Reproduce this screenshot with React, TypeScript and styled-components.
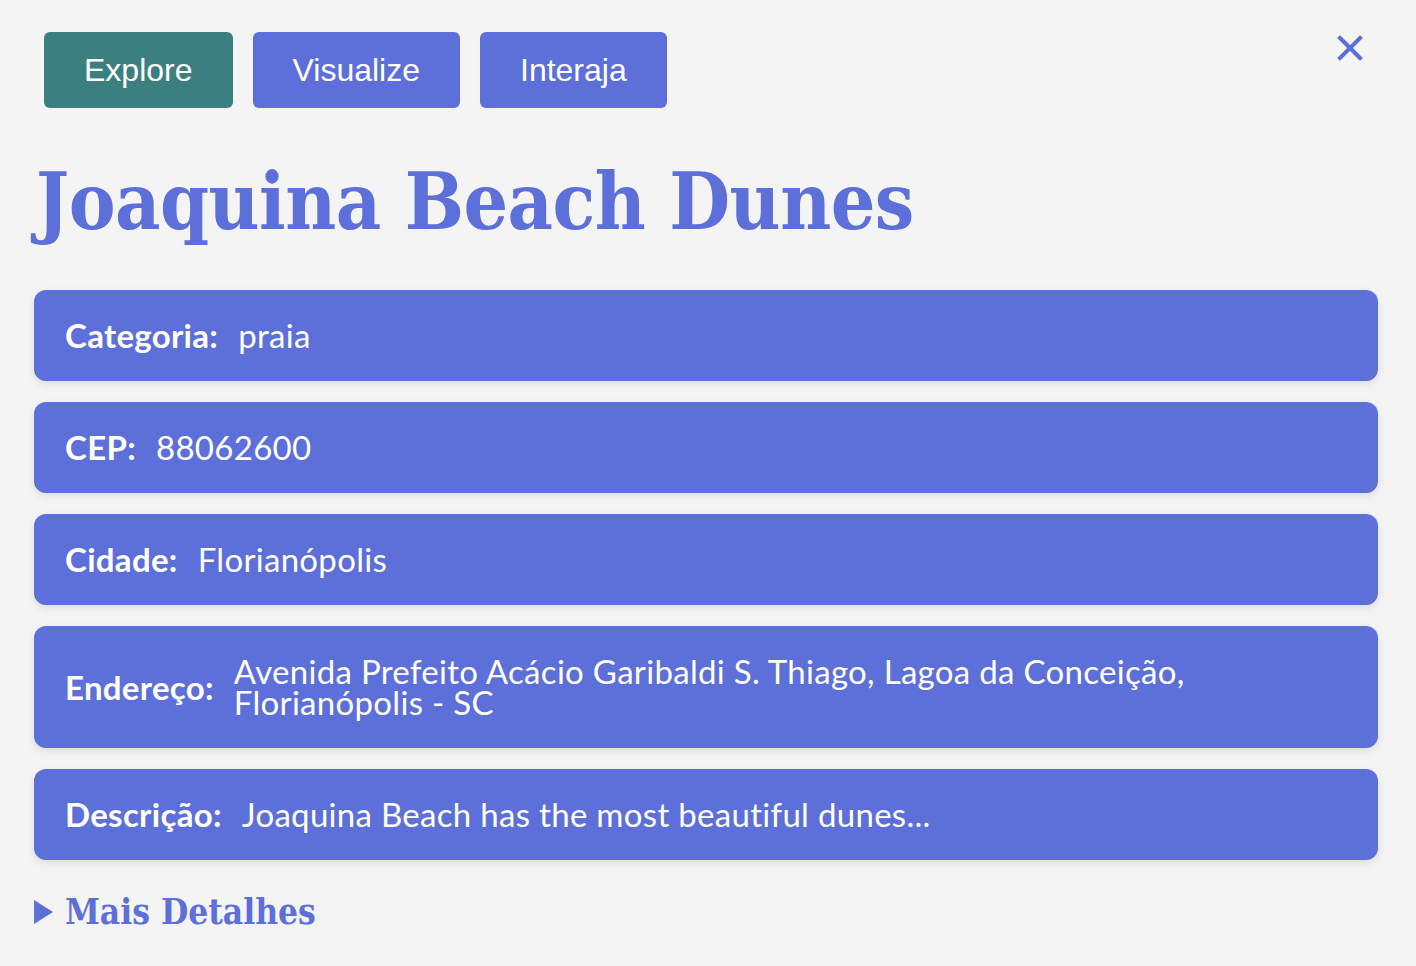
import React from "react";
import styled, { createGlobalStyle } from "styled-components";

const GlobalStyle = createGlobalStyle`
  html, body {
    margin: 0;
    padding: 0;
    background: #f4f4f4;
  }
  * { box-sizing: border-box; }
`;

const PURPLE = "#5d6fd8";
const TEAL = "#3b7f80";

const Page = styled.div`
  position: relative;
  min-height: 966px;
  padding: 22px 38px 0 34px;
  background: #f4f4f4;
`;

const Toolbar = styled.nav`
  display: flex;
  align-items: center;
`;

const NavButton = styled.button<{ $active?: boolean }>`
  margin: 10px;
  padding: 20px 40px;
  border: none;
  border-radius: 6px;
  background: ${(p) => (p.$active ? TEAL : PURPLE)};
  color: #ffffff;
  font-family: "Liberation Sans", Arial, sans-serif;
  font-size: 32px;
  line-height: 36px;
  cursor: pointer;
`;

const CloseButton = styled.button`
  position: absolute;
  top: 30px;
  right: 48px;
  width: 36px;
  height: 36px;
  padding: 0;
  border: none;
  background: transparent;
  display: flex;
  align-items: center;
  justify-content: center;
  cursor: pointer;
`;

const Title = styled.h1`
  margin: 34px 0 38px 2px;
  color: ${PURPLE};
  font-family: "DejaVu Serif Condensed", "DejaVu Serif", serif;
  font-stretch: condensed;
  font-weight: 700;
  font-size: 78px;
  line-height: 100px;
  letter-spacing: -0.5px;
`;

const CardList = styled.div`
  display: flex;
  flex-direction: column;
  gap: 21px;
`;

const Card = styled.div`
  display: flex;
  align-items: center;
  gap: 20px;
  padding: 30px 31px;
  border-radius: 12px;
  background: ${PURPLE};
  box-shadow: 0 3px 8px rgba(0, 0, 0, 0.1);
  color: #ffffff;
  font-family: Lato, "Noto Sans", sans-serif;
  font-size: 33px;
  letter-spacing: 0.3px;
  line-height: 31px;
`;

const Label = styled.span`
  font-weight: 700;
  white-space: nowrap;
`;

const Value = styled.span`
  font-weight: 400;
`;

const Details = styled.details`
  margin-top: 30px;
`;

const Summary = styled.summary`
  display: flex;
  align-items: center;
  gap: 12px;
  list-style: none;
  color: ${PURPLE};
  font-family: "DejaVu Serif Condensed", "DejaVu Serif", serif;
  font-stretch: condensed;
  font-weight: 700;
  font-size: 35px;
  line-height: 44px;
  cursor: pointer;
  &::-webkit-details-marker { display: none; }
`;

const fields: [string, string][] = [
  ["Categoria:", "praia"],
  ["CEP:", "88062600"],
  ["Cidade:", "Florianópolis"],
  ["Endereço:", "Avenida Prefeito Acácio Garibaldi S. Thiago, Lagoa da Conceição, Florianópolis - SC"],
  ["Descrição:", "Joaquina Beach has the most beautiful dunes..."],
];

export default function App() {
  return (
    <>
      <GlobalStyle />
      <Page>
        <Toolbar>
          <NavButton $active>Explore</NavButton>
          <NavButton>Visualize</NavButton>
          <NavButton>Interaja</NavButton>
        </Toolbar>
        <CloseButton aria-label="Fechar">
          <svg width="26" height="26" viewBox="0 0 26 26">
            <path d="M3 3 L23 23 M23 3 L3 23" stroke={PURPLE} strokeWidth="4" strokeLinecap="square" />
          </svg>
        </CloseButton>
        <Title>Joaquina Beach Dunes</Title>
        <CardList>
          {fields.map(([label, value]) => (
            <Card key={label}>
              <Label>{label}</Label>
              <Value>{value}</Value>
            </Card>
          ))}
        </CardList>
        <Details>
          <Summary>
            <svg width="19" height="24" viewBox="0 0 19 24">
              <path d="M0 0 L19 12 L0 24 Z" fill={PURPLE} />
            </svg>
            Mais Detalhes
          </Summary>
        </Details>
      </Page>
    </>
  );
}
